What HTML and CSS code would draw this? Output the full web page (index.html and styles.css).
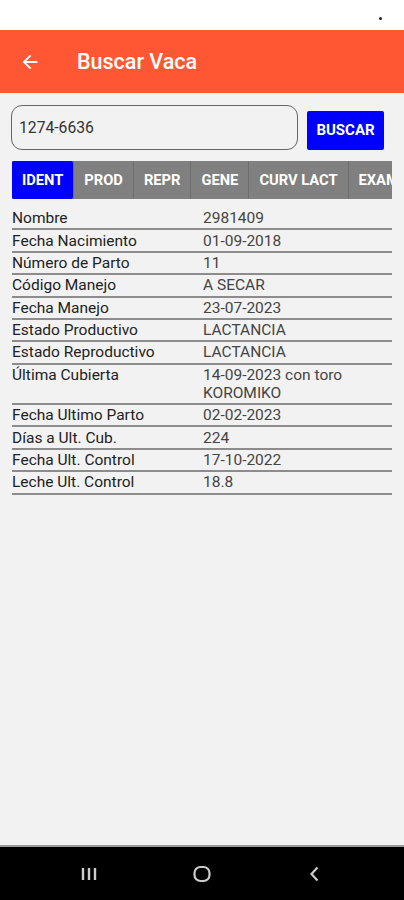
FILE: index.html
```html
<!DOCTYPE html>
<html lang="es">
<head>
  <meta charset="UTF-8">
  <title>Buscar Vaca</title>
  <meta name="viewport" content="width=device-width, initial-scale=1.0">
  <link rel="stylesheet" href="styles.css">
</head>
<body>
  <div class="phone">
    <div class="status-bar">
      <span class="status-dot"></span>
    </div>

    <div class="toolbar">
      <svg class="back" width="22" height="22" viewBox="0 0 24 24">
        <path d="M20 11H7.83l5.59-5.59L12 4l-8 8 8 8 1.41-1.41L7.83 13H20v-2z" fill="#fff"/>
      </svg>
      <h1>Buscar Vaca</h1>
    </div>

    <div class="content">
      <div class="search-row">
        <div class="search-input">1274-6636</div>
        <button class="search-btn">BUSCAR</button>
      </div>

      <div class="tabs">
        <div class="tab active">IDENT</div>
        <div class="tab">PROD</div>
        <div class="tab">REPR</div>
        <div class="tab">GENE</div>
        <div class="tab">CURV LACT</div>
        <div class="tab">EXAMEN</div>
      </div>

      <div class="info-table">
        <div class="info-row"><span class="label">Nombre</span><span class="value">2981409</span></div>
        <div class="info-row"><span class="label">Fecha Nacimiento</span><span class="value">01-09-2018</span></div>
        <div class="info-row"><span class="label">Número de Parto</span><span class="value">11</span></div>
        <div class="info-row"><span class="label">Código Manejo</span><span class="value">A SECAR</span></div>
        <div class="info-row"><span class="label">Fecha Manejo</span><span class="value">23-07-2023</span></div>
        <div class="info-row"><span class="label">Estado Productivo</span><span class="value">LACTANCIA</span></div>
        <div class="info-row"><span class="label">Estado Reproductivo</span><span class="value">LACTANCIA</span></div>
        <div class="info-row"><span class="label">Última Cubierta</span><span class="value">14-09-2023 con toro KOROMIKO</span></div>
        <div class="info-row"><span class="label">Fecha Ultimo Parto</span><span class="value">02-02-2023</span></div>
        <div class="info-row"><span class="label">Días a Ult. Cub.</span><span class="value">224</span></div>
        <div class="info-row"><span class="label">Fecha Ult. Control</span><span class="value">17-10-2022</span></div>
        <div class="info-row"><span class="label">Leche Ult. Control</span><span class="value">18.8</span></div>
      </div>
    </div>

    <div class="nav-bar">
      <svg width="20" height="20" viewBox="0 0 20 20">
        <path d="M4 4v12M10 4v12M16 4v12" stroke="#ccc" stroke-width="2.4" fill="none"/>
      </svg>
      <svg width="22" height="22" viewBox="0 0 22 22">
        <rect x="3.5" y="4" width="15" height="14" rx="6" stroke="#ccc" stroke-width="2.2" fill="none"/>
      </svg>
      <svg width="20" height="20" viewBox="0 0 20 20">
        <path d="M12.5 3.5L6.5 10l6 6.5" stroke="#ccc" stroke-width="2.2" fill="none"/>
      </svg>
    </div>
  </div>
</body>
</html>
```

FILE: styles.css
```css
:root {
  --orange: #ff5733;
  --blue: #0000ff;
  --tab-gray: #808080;
  --bg: #f2f2f2;
  --text: #2a2a2a;
}

body {
  margin: 0;
  font-family: Roboto, 'Noto Sans', sans-serif;
  color: var(--text);
}

.phone {
  width: 404px;
  height: 900px;
  display: flex;
  flex-direction: column;
  background: var(--bg);
}

.status-bar {
  height: 30px;
  background: #fff;
  position: relative;
}

.status-dot {
  position: absolute;
  left: 379px;
  top: 17px;
  width: 3px;
  height: 3px;
  border-radius: 50%;
  background: #222;
}

.toolbar {
  height: 63px;
  background: var(--orange);
  display: flex;
  align-items: center;
  padding-left: 19px;
}

.toolbar .back {
  margin-right: 36px;
}

.toolbar h1 {
  margin: 0;
  color: #fff;
  font-size: 21.5px;
  font-weight: 500;
}

.content {
  flex: 1;
  padding: 12px 12px 0 11px;
}

.search-row {
  display: flex;
  align-items: center;
}

.search-input {
  width: 278px;
  height: 43px;
  border: 1px solid #666;
  border-radius: 11px;
  padding-left: 7px;
  display: flex;
  align-items: center;
  font-size: 15.7px;
  color: #333;
  background: var(--bg);
}

.search-btn {
  margin-left: 9px;
  margin-top: 5px;
  width: 77px;
  height: 39px;
  border: none;
  border-radius: 2px;
  background: var(--blue);
  color: #fff;
  font-family: Roboto, sans-serif;
  font-weight: 700;
  font-size: 15px;
  padding: 0;
}

.tabs {
  margin-top: 11px;
  margin-left: 1px;
  width: 380px;
  height: 38px;
  display: flex;
  overflow: hidden;
  background: var(--tab-gray);
}

.tab {
  flex: none;
  display: flex;
  align-items: center;
  padding: 0 10px;
  color: #fff;
  font-weight: 700;
  font-size: 14.7px;
  background: var(--tab-gray);
  border-left: 1px solid #6e6e6e;
}

.tab:first-child {
  border-left: none;
}

.tab.active {
  background: var(--blue);
  border-radius: 2px;
}

.info-table {
  margin-top: 9px;
  margin-left: 1px;
  width: 380px;
}

.info-row {
  display: flex;
  font-size: 15.5px;
  line-height: 18px;
  padding: 1.2px 0;
  border-bottom: 2px solid #8c8c8c;
}

.info-row .label {
  width: 191px;
  flex: none;
  color: #222;
}

.info-row .value {
  color: #444;
  padding-right: 30px;
}

.nav-bar {
  height: 53px;
  background: #000;
  border-top: 2px solid #9a9a9a;
  display: flex;
  align-items: center;
  justify-content: center;
  gap: 92px;
}
```
